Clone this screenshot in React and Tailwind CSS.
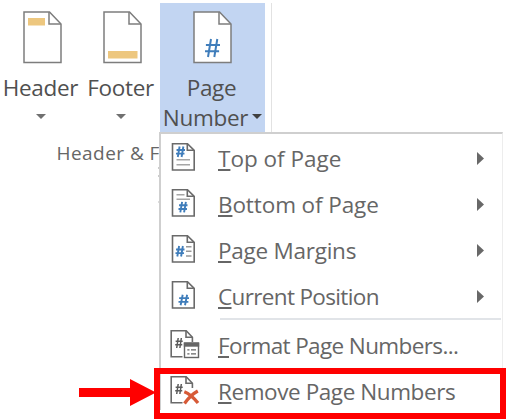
import React from "react";

const BLUE = "#3f7dbb";

function Hash({ x, y, w, h, color = BLUE, sw = 1.9 }) {
  return (
    <g stroke={color} strokeWidth={sw} fill="none">
      <path d={`M${x + w * 0.4} ${y}L${x + w * 0.2} ${y + h}M${x + w * 0.82} ${y}L${x + w * 0.62} ${y + h}`} />
      <path d={`M${x + w * 0.06} ${y + h * 0.33}H${x + w}M${x} ${y + h * 0.68}H${x + w * 0.94}`} />
    </g>
  );
}

function BigPage({ children, className = "" }) {
  return (
    <svg width="40" height="54" viewBox="0 0 40 54" className={"block " + className}>
      <path d="M1 1H26.5L38 13V51.5H1Z" fill="#fff" stroke="#7d7d7d" strokeWidth="1.5" />
      <path d="M26 1V13H38" fill="none" stroke="#7d7d7d" strokeWidth="1.5" />
      {children}
    </svg>
  );
}

function SmallPage({ children }) {
  return (
    <svg width="32" height="32" viewBox="0 0 32 32" className="mb-[4px] block shrink-0">
      <path d="M3.5 2.7H18.5L25.2 9.4V29H3.5Z" fill="#fff" stroke="#6a6a6a" strokeWidth="1.6" />
      <path d="M18.3 3V9.2H25" fill="none" stroke="#6a6a6a" strokeWidth="1.6" />
      {children}
    </svg>
  );
}

function CutPage({ children }) {
  return (
    <svg width="32" height="32" viewBox="0 0 32 32" className="mb-[4px] block shrink-0">
      <path d="M13.5 28.8H2.2V2.7H17.2L23.4 9.2V14" fill="none" stroke="#6a6a6a" strokeWidth="1.6" />
      <path d="M17 3V9.2H23.2" fill="none" stroke="#6a6a6a" strokeWidth="1.6" />
      <Hash x={6.2} y={10} w={7.5} h={10} color="#5c5c5c" sw={1.5} />
      {children}
    </svg>
  );
}

function Down({ className }) {
  return (
    <svg width="10" height="5" viewBox="0 0 10 5" className={className}>
      <path d="M0 0H10L5 5Z" fill="currentColor" />
    </svg>
  );
}

function Item({ icon, label, tracking, arrow }) {
  return (
    <div className="flex h-[46px] items-center pl-[8px]">
      {icon}
      <span className={"ml-[17px] whitespace-nowrap text-[22.5px] leading-[46px] text-[#666] " + tracking}>
        <span className="underline decoration-[1.5px] underline-offset-[2px] [text-decoration-skip-ink:none]">{label[0]}</span>
        {label.slice(1)}
      </span>
      {arrow && (
        <svg width="7" height="13" viewBox="0 0 7 13" className="mr-[18px] mb-[2px] ml-auto">
          <path d="M0 0L7 6.5L0 13Z" fill="#686868" />
        </svg>
      )}
    </div>
  );
}

export default function App() {
  return (
    <div className="relative h-[420px] w-[506px] overflow-hidden bg-white font-['Open_Sans','Noto_Sans',sans-serif] text-[#505050]">
      <div className="flex h-[133px] pt-[3px]">
        <div className="flex w-[81px] flex-col items-center pt-[8px]">
          <BigPage className="ml-[4px]"><rect x="5" y="7" width="17" height="7.5" fill="#edc77f" /></BigPage>
          <span className="mt-[8px] text-[22.5px] leading-[30px] tracking-[-0.3px] whitespace-nowrap">Header</span>
          <Down className="mt-[11px] text-[#707070]" />
        </div>
        <div className="flex w-[79px] flex-col items-center pt-[8px]">
          <BigPage className="ml-[4px]"><rect x="5" y="40" width="29.5" height="7.5" fill="#edc77f" /></BigPage>
          <span className="mt-[8px] text-[22.5px] leading-[30px] tracking-[-0.3px] whitespace-nowrap">Footer</span>
          <Down className="mt-[11px] text-[#707070]" />
        </div>
        <div className="flex w-[105px] flex-col items-center bg-[#c2d5f2] pt-[8px]">
          <BigPage className="ml-px"><Hash x={12} y={28} w={15} h={18} sw={2} /></BigPage>
          <span className="mt-[8px] mr-[2px] text-[22.5px] leading-[30px] tracking-[-0.3px] whitespace-nowrap">Page</span>
          <div className="flex items-center gap-[4px]">
            <span className="text-[22.5px] leading-[30px] tracking-[-0.3px] whitespace-nowrap">Number</span>
            <Down className="mb-[4px] text-[#404040]" />
          </div>
        </div>
        <div className="ml-[6px] w-px bg-[#e2e2e2]" />
      </div>
      <div className="pl-[56.5px] text-[19px] leading-[40px] tracking-[0.45px] whitespace-nowrap text-[#666]">Header &amp; Footer</div>

      <div className="absolute top-[132px] left-[159px] h-[278px] w-[344px] border-t-2 border-r border-l-2 border-t-[#cfcfcf] border-r-[#ededed] border-l-[#cfcfcf] bg-white pt-[2px]">
        <Item arrow label="Top of Page" tracking="tracking-[0px]" icon={
          <SmallPage>
            <Hash x={7} y={5.5} w={9} h={10.5} />
            <path d="M7.5 18.7H21M7.5 23.7H21" stroke="#a6a6a6" strokeWidth="1.4" />
          </SmallPage>} />
        <Item arrow label="Bottom of Page" tracking="tracking-[-0.1px]" icon={
          <SmallPage>
            <path d="M7.5 7.7H15.5M7.5 12.3H21" stroke="#a6a6a6" strokeWidth="1.4" />
            <Hash x={9.5} y={14.8} w={9} h={10.5} />
          </SmallPage>} />
        <Item arrow label="Page Margins" tracking="tracking-[-0.25px]" icon={
          <SmallPage>
            <Hash x={6.5} y={13} w={9} h={10.5} />
            <path d="M17 13.7H22.5M17 18.3H22.5M17 23H22.5" stroke="#999" strokeWidth="1.4" />
          </SmallPage>} />
        <Item arrow label="Current Position" tracking="tracking-[-0.65px]" icon={
          <SmallPage><Hash x={9.5} y={15.7} w={10.5} h={10.5} /></SmallPage>} />
        <div className="-mt-[2px] mr-[1px] ml-[59px] h-[2px] bg-[#e1e4e8]" />
        <div className="h-[3px]" />
        <Item label="Format Page Numbers..." tracking="tracking-[-0.62px]" icon={
          <CutPage>
            <rect x="15.5" y="15" width="14" height="14.5" fill="#fff" stroke="#666" strokeWidth="1.4" />
            <path d="M14.8 16.7H30.2" stroke="#666" strokeWidth="4" />
            <path d="M18.3 21.8H20.5M18.3 25.8H20.5M22 21.8H27M22 25.8H27" stroke="#666" strokeWidth="1.3" />
          </CutPage>} />
        <Item label="Remove Page Numbers" tracking="tracking-[-0.42px]" icon={
          <CutPage>
            <path d="M15.3 17.8Q22 20.5 29 29M28.8 17Q21.5 21 15.5 29.5" fill="none" stroke="#d75a37" strokeWidth="3.3" />
          </CutPage>} />
      </div>

      <div className="absolute top-[368px] left-[154px] h-[51px] w-[352px] border-[6px] border-[#ff0000]" />
      <svg width="77" height="28" viewBox="0 0 77 28" className="absolute top-[379px] left-[79px]">
        <path d="M0 9H51V0L77 13.5L51 27V18H0Z" fill="#ff0000" />
      </svg>
      <div className="absolute top-[167px] left-[158px] flex flex-col">
        <div className="h-[2px] w-px bg-[#ccc]" />
        <div className="mt-[6px] h-[2px] w-px bg-[#ccc]" />
        <div className="mt-[24px] h-[2px] w-px bg-[#ddd]" />
      </div>
    </div>
  );
}
